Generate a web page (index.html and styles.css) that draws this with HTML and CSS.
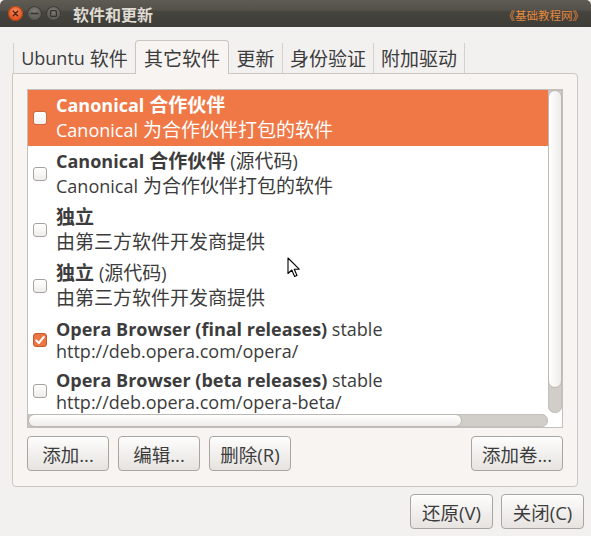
FILE: index.html
```html
<!DOCTYPE html>
<html lang="zh-CN">
<head>
<meta charset="utf-8">
<title>软件和更新</title>
<link rel="stylesheet" href="styles.css">
</head>
<body>
<div class="window">
  <header class="titlebar">
    <div class="wm-buttons">
      <span class="wm-btn close"><svg width="15" height="15" viewBox="0 0 15 15"><path d="M5.3 5.3 L9.7 9.7 M9.7 5.3 L5.3 9.7" stroke="#4a1d0c" stroke-width="1.3" stroke-linecap="round"/></svg></span>
      <span class="wm-btn"><svg width="15" height="15" viewBox="0 0 15 15"><path d="M4.2 7.5 H10.8" stroke="#34332f" stroke-width="1.6" stroke-linecap="round"/></svg></span>
      <span class="wm-btn"><svg width="15" height="15" viewBox="0 0 15 15"><rect x="4.6" y="4.6" width="5.8" height="5.8" rx="1" fill="none" stroke="#34332f" stroke-width="1.3"/></svg></span>
    </div>
    <span class="title">软件和更新</span>
    <span class="watermark">《基础教程网》</span>
  </header>

  <nav class="tabs">
    <div class="tab"><span class="en">Ubuntu</span>&nbsp;软件</div>
    <div class="tab active">其它软件</div>
    <div class="tab">更新</div>
    <div class="tab">身份验证</div>
    <div class="tab last">附加驱动</div>
  </nav>

  <section class="panel">
    <div class="listframe">
      <div class="list">
        <div class="row cjk selected">
          <span class="check"></span>
          <div class="text">
            <div class="line"><b><span class="en">Canonical</span> 合作伙伴</b></div>
            <div class="line"><span class="en">Canonical</span> 为合作伙伴打包的软件</div>
          </div>
        </div>
        <div class="row cjk">
          <span class="check"></span>
          <div class="text">
            <div class="line"><b><span class="en">Canonical</span> 合作伙伴</b> <span class="en">(</span>源代码<span class="en">)</span></div>
            <div class="line"><span class="en">Canonical</span> 为合作伙伴打包的软件</div>
          </div>
        </div>
        <div class="row cjk">
          <span class="check"></span>
          <div class="text">
            <div class="line"><b>独立</b></div>
            <div class="line">由第三方软件开发商提供</div>
          </div>
        </div>
        <div class="row cjk">
          <span class="check"></span>
          <div class="text">
            <div class="line"><b>独立</b> <span class="en">(</span>源代码<span class="en">)</span></div>
            <div class="line">由第三方软件开发商提供</div>
          </div>
        </div>
        <div class="row latin">
          <span class="check checked"><svg width="14" height="14" viewBox="0 0 14 14"><path d="M3.2 7.4 L5.8 10 L10.8 3.8" fill="none" stroke="#fff" stroke-width="2" stroke-linecap="round" stroke-linejoin="round"/></svg></span>
          <div class="text">
            <div class="line"><b>Opera Browser (final releases)</b> stable</div>
            <div class="line">http://deb.opera.com/opera/</div>
          </div>
        </div>
        <div class="row latin">
          <span class="check"></span>
          <div class="text">
            <div class="line"><b>Opera Browser (beta releases)</b> stable</div>
            <div class="line">http://deb.opera.com/opera-beta/</div>
          </div>
        </div>
      </div>
      <div class="vscroll"><div class="vthumb"></div></div>
      <div class="hscroll"><div class="hthumb"></div></div>
    </div>

    <div class="actions">
      <button class="btn">添加...</button>
      <button class="btn">编辑...</button>
      <button class="btn">删除(R)</button>
      <button class="btn wide">添加卷...</button>
    </div>
  </section>

  <footer class="dialog-buttons">
    <button class="btn">还原(V)</button>
    <button class="btn">关闭(C)</button>
  </footer>

  <svg class="cursor" width="14" height="21" viewBox="0 0 14 21"><path d="M1 1 L1 16.5 L4.8 13 L7.6 19.5 L10 18.5 L7.3 12.2 L12.2 12.2 Z" fill="#fff" stroke="#000" stroke-width="1.1" stroke-linejoin="round"/></svg>
</div>
</body>
</html>
```

FILE: styles.css
```css
* { box-sizing: border-box; }

html, body {
  margin: 0;
  padding: 0;
}

body {
  width: 591px;
  height: 536px;
  overflow: hidden;
  background: #f2f1f0;
  font-family: "Open Sans", "Noto Sans CJK SC", sans-serif;
  color: #3c3c3c;
}

.window {
  position: relative;
  width: 591px;
  height: 536px;
}

.en { font-size: 18px; }

/* Title bar */
.titlebar {
  height: 27px;
  display: flex;
  align-items: center;
  background: linear-gradient(#5e5b53 0%, #55524b 35%, #46443e 45%, #3d3c37 100%);
  border-radius: 5px 5px 0 0;
}

.wm-buttons {
  display: flex;
  gap: 4px;
  margin-left: 8px;
}

.wm-btn {
  width: 15px;
  height: 15px;
  border-radius: 50%;
  background: radial-gradient(circle at 50% 35%, #7d7b75, #5a5853 70%);
  box-shadow: inset 0 0 0 1px #3b3a36;
  display: block;
}

.wm-btn svg { display: block; }

.wm-btn.close {
  background: radial-gradient(circle at 50% 35%, #f7875a, #e0531f 70%);
  box-shadow: inset 0 0 0 1px #a8441b;
}

.title {
  margin-left: 12px;
  font-size: 16px;
  font-weight: bold;
  color: #dfdbd2;
}

.watermark {
  margin-left: auto;
  margin-right: 7px;
  align-self: flex-end;
  margin-bottom: 4px;
  font-size: 11.5px;
  line-height: 14px;
  color: #e38a3f;
}

/* Tabs */
.tabs {
  display: grid;
  grid-template-columns: 122px 94px 53px 91px 92px;
  align-items: end;
  height: 33px;
  margin: 13px 0 0 13px;
}

.tab {
  height: 30px;
  display: flex;
  align-items: center;
  justify-content: center;
  font-size: 19px;
  border-left: 1px solid #d4d1cc;
  white-space: nowrap;
}

.tab.last { border-right: 1px solid #d4d1cc; }

.tab.active {
  height: 34px;
  margin-bottom: -1px;
  z-index: 1;
  background: #f7f4f1;
  border: 1px solid #c9c6c1;
  border-bottom: none;
  border-radius: 4px 4px 0 0;
}

.tab.active + .tab { border-left: none; }

/* Panel */
.panel {
  margin: 0 13px 0 12px;
  background: #f7f4f1;
  border: 1px solid #cbc8c3;
  border-radius: 0 4px 4px 4px;
  padding: 15px 14px 15px 14px;
}

.listframe {
  display: grid;
  grid-template-columns: 1fr 14px;
  grid-template-rows: 323px 14px;
  border: 1px solid #c3c0bb;
  background: #fff;
}

.list {
  overflow: hidden;
}

.row {
  display: flex;
  align-items: center;
  gap: 9px;
  padding-left: 5px;
  font-size: 19px;
  white-space: nowrap;
}

.row.cjk { padding-top: 3px; padding-bottom: 3px; }
.row.cjk .line { line-height: 25px; }

.row.latin { padding-top: 4px; padding-bottom: 3px; font-size: 18px; }
.row.latin .line { line-height: 22px; }

.row.selected {
  background: #f07746;
  color: #fff;
}

.row b { font-weight: bold; }

.check {
  flex: none;
  width: 14px;
  height: 14px;
  border: 1px solid #a6a29d;
  border-radius: 3px;
  background: linear-gradient(#ffffff, #efedea);
  display: block;
}

.row.selected .check {
  border-color: #c96a44;
  background: linear-gradient(#ffffff, #f3f1ef);
}

.check.checked {
  border-color: #c25a2e;
  background: #ec7544;
}

.check svg { display: block; margin: -1px; }

/* Scrollbars */
.vscroll {
  background: #d1cec9;
  border-radius: 0 0 7px 7px;
  box-shadow: inset 0 0 0 1px #c4c1bc;
}

.vthumb {
  height: 298px;
  background: linear-gradient(to right, #ffffff, #efedea);
  border: 1px solid #bcb9b4;
  border-radius: 7px;
}

.hscroll {
  background: #d1cec9;
  border-radius: 0 7px 7px 0;
  box-shadow: inset 0 0 0 1px #c4c1bc;
  margin-top: 1px;
}

.hthumb {
  width: 434px;
  height: 100%;
  background: linear-gradient(#ffffff, #efedea);
  border: 1px solid #bcb9b4;
  border-radius: 7px;
}

/* Buttons */
.actions {
  display: flex;
  gap: 9px;
  margin-top: 8px;
}

.btn {
  width: 82px;
  height: 35px;
  padding: 0;
  font-family: "Open Sans", "Noto Sans CJK SC", sans-serif;
  font-size: 18.5px;
  color: #3c3c3c;
  border: 1px solid #a9a5a0;
  border-radius: 4px;
  background: linear-gradient(#fdfdfc 0%, #f2f0ee 50%, #e6e3e0 100%);
  box-shadow: inset 0 1px 0 #ffffff;
}

.btn.wide {
  width: 92px;
  margin-left: auto;
}

.dialog-buttons {
  display: flex;
  justify-content: flex-end;
  gap: 8px;
  padding: 7px 7px 0 0;
}

.dialog-buttons .btn { width: 83px; }

.cursor {
  position: absolute;
  left: 287px;
  top: 257px;
}
```
